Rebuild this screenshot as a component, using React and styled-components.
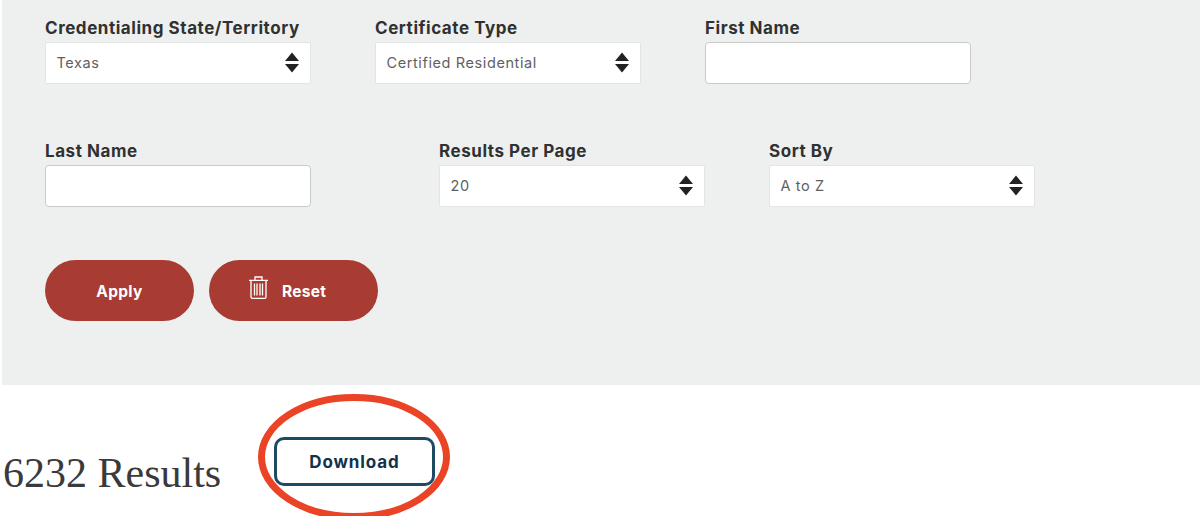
import React from "react";
import styled, { createGlobalStyle } from "styled-components";

const GlobalStyle = createGlobalStyle`
  html, body {
    margin: 0;
    padding: 0;
    height: 516px;
    overflow: hidden;
    background: #fff;
    font-family: "Inter", "Liberation Sans", sans-serif;
  }
`;

function SelectArrows() {
  return (
    <svg width="14" height="21" viewBox="0 0 14 21">
      <path d="M7 0.5 L14 9 H0 Z M0 12 H14 L7 20.5 Z" fill="#222" />
    </svg>
  );
}

function TrashIcon() {
  return (
    <TrashSvg width="19" height="23" viewBox="0 0 19 23" fill="none" stroke="#fff" strokeWidth="1.3">
      <path d="M0 4.4 H19 M6 4.4 V1 H13 V4.4" />
      <path d="M2 4.4 V21 Q2 22.3 3.3 22.3 H15.7 Q17 22.3 17 21 V4.4" />
      <path d="M5.5 7.5 V19.5 M8 7.5 V19.5 M11 7.5 V19.5 M13.5 7.5 V19.5" />
    </TrashSvg>
  );
}

export default function App() {
  return (
    <>
      <GlobalStyle />
      <Panel>
        <Row>
          <Field>
            <Label>Credentialing State/Territory</Label>
            <Select><span>Texas</span><SelectArrows /></Select>
          </Field>
          <Field>
            <Label>Certificate Type</Label>
            <Select><span>Certified Residential</span><SelectArrows /></Select>
          </Field>
          <Field>
            <Label>First Name</Label>
            <Input />
          </Field>
        </Row>
        <Row $top={56}>
          <Field $wide>
            <Label>Last Name</Label>
            <Input />
          </Field>
          <Field>
            <Label>Results Per Page</Label>
            <Select><span>20</span><SelectArrows /></Select>
          </Field>
          <Field>
            <Label>Sort By</Label>
            <Select><span>A to Z</span><SelectArrows /></Select>
          </Field>
        </Row>
        <Buttons>
          <PillButton $width={149}>Apply</PillButton>
          <PillButton $width={169} $left={40}>
            <TrashIcon />
            <span>Reset</span>
          </PillButton>
        </Buttons>
      </Panel>
      <ResultsBar>
        <Count>6232 Results</Count>
        <DownloadWrap>
          <Circle width="192" height="126" viewBox="0 0 192 126">
            <ellipse cx="96" cy="63" rx="92.5" ry="59.5" fill="none" stroke="#ea4326" strokeWidth="7" />
          </Circle>
          <Download>Download</Download>
        </DownloadWrap>
      </ResultsBar>
    </>
  );
}

const Panel = styled.div`
  margin-left: 2px;
  height: 385px;
  box-sizing: border-box;
  padding: 17px 0 0 43px;
  background: #eef0ef;
`;

const Row = styled.div`
  display: flex;
  gap: 64px;
  margin-top: ${(p) => p.$top || 0}px;
`;

const Field = styled.div`
  width: 266px;
  margin-right: ${(p) => (p.$wide ? 64 : 0)}px;
`;

const Label = styled.div`
  height: 20px;
  margin-bottom: 5px;
  padding-top: 1px;
  box-sizing: border-box;
  font-size: 17px;
  line-height: 20px;
  font-weight: 700;
  letter-spacing: 0.55px;
  color: #303131;
  white-space: nowrap;
`;

const Select = styled.div`
  height: 42px;
  box-sizing: border-box;
  display: flex;
  align-items: center;
  justify-content: space-between;
  padding: 0 11px 2px 10.5px;
  background: #fff;
  border: 1px solid #e3e4e4;
  border-radius: 2px;
  font-size: 14.5px;
  letter-spacing: 0.6px;
  color: #5f5f5f;
`;

const Input = styled.div`
  height: 42px;
  box-sizing: border-box;
  background: #fff;
  border: 1px solid #c9cbcb;
  border-radius: 4px;
`;

const Buttons = styled.div`
  display: flex;
  gap: 15px;
  margin-top: 53px;
`;

const PillButton = styled.div`
  width: ${(p) => p.$width}px;
  height: 61px;
  box-sizing: border-box;
  display: flex;
  align-items: center;
  justify-content: ${(p) => (p.$left ? "flex-start" : "center")};
  gap: 14px;
  padding-left: ${(p) => p.$left || 0}px;
  padding-top: 2px;
  background: #a83b32;
  border-radius: 31px;
  color: #fff;
  font-size: 15.5px;
  font-weight: 700;
  letter-spacing: 0.3px;
`;

const TrashSvg = styled.svg`
  margin-bottom: 9px;
`;

const ResultsBar = styled.div`
  display: flex;
  align-items: flex-start;
  padding-left: 3px;
`;

const Count = styled.h2`
  margin: 63px 0 0;
  width: 271px;
  font-family: "Liberation Serif", serif;
  font-size: 42px;
  line-height: 50px;
  font-weight: 400;
  color: #3a3a3a;
`;

const DownloadWrap = styled.div`
  position: relative;
  margin-top: 52px;
`;

const Circle = styled.svg`
  position: absolute;
  left: -16px;
  top: -43px;
`;

const Download = styled.div`
  position: relative;
  width: 161px;
  height: 49px;
  box-sizing: border-box;
  display: flex;
  align-items: center;
  justify-content: center;
  background: #fff;
  border: 3px solid #1f4a66;
  border-radius: 10px;
  color: #14324a;
  font-size: 17px;
  font-weight: 700;
  letter-spacing: 0.9px;
`;
